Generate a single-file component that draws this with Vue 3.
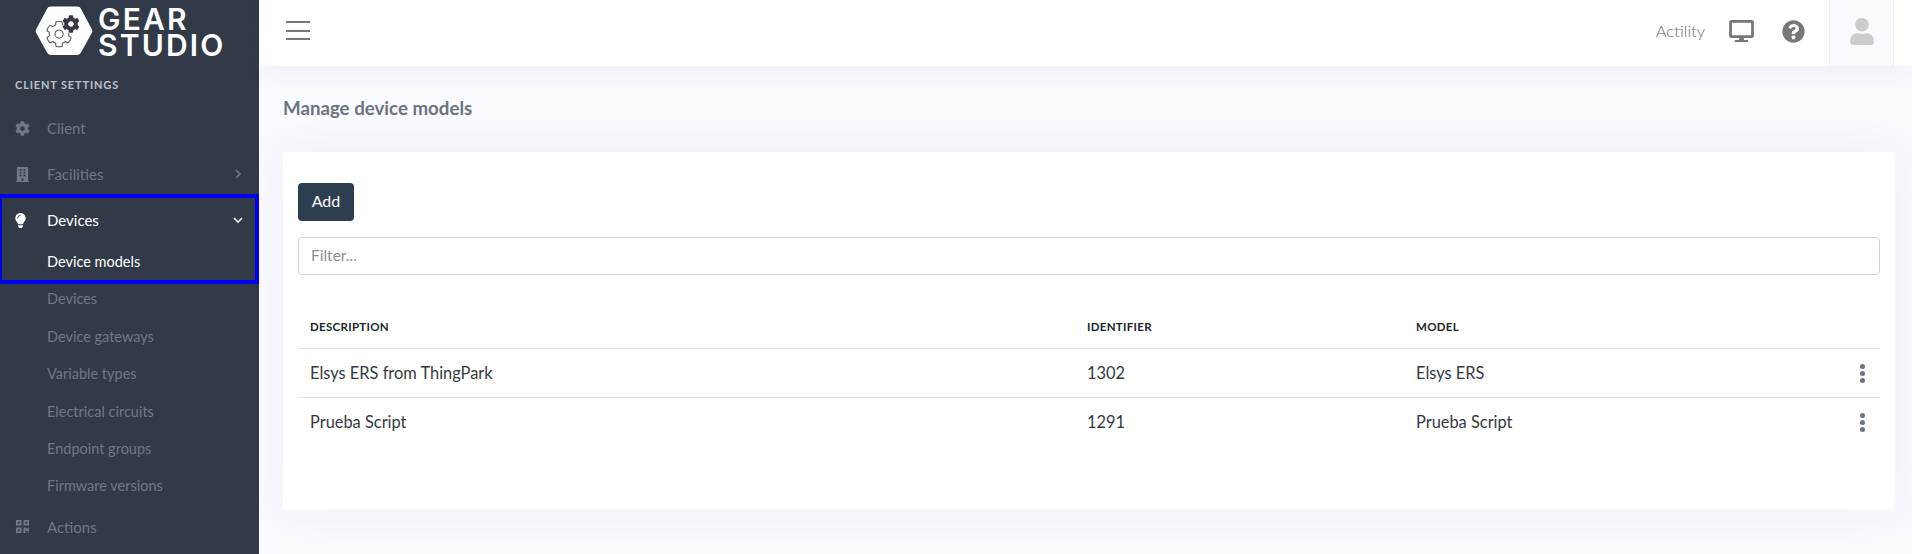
<template>
  <div class="layout">
    <aside class="sidebar">
      <div class="logo">
        <svg class="logo-mark" viewBox="0 0 58 50" width="58" height="50">
          <path class="logo-hex" d="M16 .5h26c2 0 3 .8 4 2.400l10.500 19.500c1 1.800 1 3.400 0 5.200L46 46.600c-1 1.600-2 2.400-4 2.400H16c-2 0-3-.8-4-2.400L1.500 27.600c-1-1.800-1-3.400 0-5.200L12 2.900C13 1.300 14 .5 16 .5z" />
          <g transform="translate(11 15) scale(.051)">
            <path class="logo-gear-line" :d="icons.cog" />
          </g>
          <g transform="translate(27 9) scale(.035)">
            <path class="logo-gear-fill" :d="icons.cog" />
          </g>
        </svg>
        <div class="logo-text">GEAR<br />STUDIO</div>
      </div>

      <div class="section-title">CLIENT SETTINGS</div>

      <nav class="nav">
        <a class="nav-row">
          <svg class="nav-icon" viewBox="0 0 512 512"><path :d="icons.cog" /></svg>
          <span>Client</span>
        </a>
        <a class="nav-row">
          <svg class="nav-icon" viewBox="0 0 448 512"><path :d="icons.building" /></svg>
          <span>Facilities</span>
          <svg class="chevron" viewBox="0 0 10 12"><path d="M3 2l4 4-4 4" /></svg>
        </a>
        <div class="nav-open">
          <a class="nav-row active">
            <svg class="nav-icon bulb" viewBox="0 0 352 512"><path :d="icons.bulb" /></svg>
            <span>Devices</span>
            <svg class="chevron" viewBox="0 0 12 10"><path d="M2 3l4 4 4-4" /></svg>
          </a>
          <a class="sub-row active first">Device models</a>
        </div>
        <a v-for="item in subItems" :key="item" class="sub-row">{{ item }}</a>
        <a class="nav-row last">
          <svg class="nav-icon" viewBox="0 0 448 512"><path :d="icons.qrcode" /></svg>
          <span>Actions</span>
        </a>
      </nav>
    </aside>

    <div class="main">
      <header class="topbar">
        <div class="burger"><i></i><i></i><i></i></div>
        <div class="top-right">
          <span class="client-name">Actility</span>
          <svg class="top-desktop" viewBox="0 0 576 512"><path :d="icons.desktop" /></svg>
          <svg class="top-help" viewBox="0 0 512 512"><path :d="icons.help" /></svg>
          <div class="user-cell">
            <svg class="top-user" viewBox="0 0 448 512"><path :d="icons.user" /></svg>
          </div>
        </div>
      </header>

      <main class="content">
        <h1 class="page-title">Manage device models</h1>
        <section class="card">
          <button class="btn-add">Add</button>
          <input class="filter" type="text" placeholder="Filter..." />
          <table class="models">
            <thead>
              <tr>
                <th class="col-desc">Description</th>
                <th class="col-id">Identifier</th>
                <th>Model</th>
                <th class="col-menu"></th>
              </tr>
            </thead>
            <tbody>
              <tr v-for="row in rows" :key="row.id">
                <td>{{ row.description }}</td>
                <td>{{ row.id }}</td>
                <td>{{ row.model }}</td>
                <td class="menu-cell">
                  <span class="dots"><i></i><i></i><i></i></span>
                </td>
              </tr>
            </tbody>
          </table>
        </section>
      </main>
    </div>
  </div>
</template>

<script setup>
const subItems = [
  'Devices',
  'Device gateways',
  'Variable types',
  'Electrical circuits',
  'Endpoint groups',
  'Firmware versions'
]

const rows = [
  { description: 'Elsys ERS from ThingPark', id: 1302, model: 'Elsys ERS' },
  { description: 'Prueba Script', id: 1291, model: 'Prueba Script' }
]

const icons = {
  cog: 'M487.4 315.7l-42.6-24.6c4.3-23.2 4.3-47 0-70.2l42.6-24.6c4.9-2.8 7.1-8.6 5.5-14-11.1-35.6-30-67.8-54.7-94.6-3.8-4.1-10-5.1-14.8-2.3L380.8 110c-17.9-15.4-38.5-27.3-60.8-35.1V25.8c0-5.6-3.9-10.5-9.4-11.7-36.7-8.2-74.3-7.8-109.2 0-5.5 1.2-9.4 6.1-9.4 11.7V75c-22.2 7.9-42.8 19.8-60.8 35.1L88.7 85.5c-4.9-2.8-11-1.9-14.8 2.3-24.7 26.7-43.6 58.9-54.7 94.6-1.7 5.4.6 11.2 5.5 14L67.3 221c-4.3 23.2-4.3 47 0 70.2l-42.6 24.6c-4.9 2.8-7.1 8.6-5.5 14 11.1 35.6 30 67.8 54.7 94.6 3.8 4.1 10 5.1 14.8 2.3l42.6-24.6c17.9 15.4 38.5 27.3 60.8 35.1v49.2c0 5.6 3.9 10.5 9.4 11.7 36.7 8.2 74.3 7.8 109.2 0 5.5-1.2 9.4-6.1 9.4-11.7v-49.2c22.2-7.9 42.8-19.8 60.8-35.1l42.6 24.6c4.9 2.8 11 1.9 14.8-2.3 24.7-26.7 43.6-58.9 54.7-94.6 1.5-5.5-.7-11.3-5.6-14.1zM256 336c-44.1 0-80-35.9-80-80s35.9-80 80-80 80 35.9 80 80-35.9 80-80 80z',
  building: 'M436 480h-20V24c0-13.3-10.7-24-24-24H56C42.7 0 32 10.7 32 24v456H12c-6.6 0-12 5.4-12 12v20h448v-20c0-6.6-5.4-12-12-12zM128 76c0-6.6 5.4-12 12-12h40c6.6 0 12 5.4 12 12v40c0 6.6-5.4 12-12 12h-40c-6.6 0-12-5.4-12-12V76zm0 96c0-6.6 5.4-12 12-12h40c6.6 0 12 5.4 12 12v40c0 6.6-5.4 12-12 12h-40c-6.6 0-12-5.4-12-12v-40zm52 148h-40c-6.6 0-12-5.4-12-12v-40c0-6.6 5.4-12 12-12h40c6.6 0 12 5.4 12 12v40c0 6.6-5.4 12-12 12zm76 160h-64v-84c0-6.6 5.4-12 12-12h40c6.6 0 12 5.4 12 12v84zm64-172c0 6.6-5.4 12-12 12h-40c-6.6 0-12-5.4-12-12v-40c0-6.6 5.4-12 12-12h40c6.6 0 12 5.4 12 12v40zm0-96c0 6.6-5.4 12-12 12h-40c-6.6 0-12-5.4-12-12v-40c0-6.6 5.4-12 12-12h40c6.6 0 12 5.4 12 12v40zm0-96c0 6.6-5.4 12-12 12h-40c-6.6 0-12-5.4-12-12V76c0-6.6 5.4-12 12-12h40c6.6 0 12 5.4 12 12v40z',
  bulb: 'M96.06 454.35c.01 6.29 1.87 12.45 5.36 17.69l17.09 25.69a31.99 31.99 0 0 0 26.64 14.28h61.71a31.99 31.99 0 0 0 26.64-14.28l17.09-25.69a31.989 31.989 0 0 0 5.36-17.69l.04-38.35H96.01l.05 38.35zM0 176c0 44.37 16.45 84.85 43.56 115.78 16.52 18.85 42.36 58.23 52.21 91.45.04.26.07.52.11.78h160.24c.04-.26.07-.51.11-.78 9.85-33.22 35.69-72.6 52.21-91.45C335.55 260.85 352 220.37 352 176 352 78.61 272.91-.3 175.45 0 73.44.31 0 82.97 0 176zm176-80c-44.11 0-80 35.89-80 80 0 8.84-7.16 16-16 16s-16-7.16-16-16c0-61.76 50.24-112 112-112 8.84 0 16 7.16 16 16s-7.16 16-16 16z',
  qrcode: 'M0 224h192V32H0v192zM64 96h64v64H64V96zm192-64v192h192V32H256zm128 128h-64V96h64v64zM0 480h192V288H0v192zm64-128h64v64H64v-64zm352-64h32v128h-96v-32h-32v96h-64V288h96v32h64v-32zm0 160h32v32h-32v-32zm-64 0h32v32h-32v-32z',
  desktop: 'M528 0H48C21.5 0 0 21.5 0 48v320c0 26.5 21.5 48 48 48h192l-16 48h-72c-13.3 0-24 10.7-24 24s10.7 24 24 24h272c13.3 0 24-10.7 24-24s-10.7-24-24-24h-72l-16-48h192c26.5 0 48-21.5 48-48V48c0-26.5-21.5-48-48-48zm-16 352H64V64h448v288z',
  help: 'M504 256c0 136.997-111.043 248-248 248S8 392.997 8 256C8 119.083 119.043 8 256 8s248 111.083 248 248zM262.655 90c-54.497 0-89.255 22.957-116.549 63.758-3.536 5.286-2.353 12.415 2.715 16.258l34.699 26.31c5.205 3.947 12.621 3.008 16.665-2.122 17.864-22.658 30.113-35.797 57.303-35.797 20.429 0 45.698 13.148 45.698 32.958 0 14.976-12.363 22.667-32.534 33.976C247.128 238.528 216 254.941 216 296v4c0 6.627 5.373 12 12 12h56c6.627 0 12-5.373 12-12v-1.333c0-28.462 83.186-29.647 83.186-106.667 0-58.002-60.165-102-116.531-102zM256 338c-25.365 0-46 20.635-46 46 0 25.364 20.635 46 46 46s46-20.636 46-46c0-25.365-20.635-46-46-46z',
  user: 'M224 256c70.7 0 128-57.3 128-128S294.7 0 224 0 96 57.3 96 128s57.3 128 128 128zm89.6 32h-16.7c-22.2 10.2-46.9 16-72.9 16s-50.6-5.8-72.9-16h-16.7C60.2 288 0 348.2 0 422.4V464c0 26.5 21.5 48 48 48h352c26.5 0 48-21.5 48-48v-41.6c0-74.2-60.2-134.4-134.4-134.4z'
}
</script>

<style>
html,
body {
  margin: 0;
  overflow: hidden;
}
</style>

<style scoped>
.layout {
  display: flex;
  width: 1912px;
  height: 554px;
  overflow: hidden;
  font-family: 'Lato', 'Noto Sans', sans-serif;
  background: #f9faff;
}

/* sidebar */
.sidebar {
  flex: 0 0 259px;
  height: 554px;
  overflow: hidden;
  background: #323a47;
  color: #6f7885;
}

.logo {
  height: 66px;
  box-sizing: border-box;
  padding: 6px 0 0 35px;
  display: flex;
  gap: 5px;
}

.logo-mark {
  flex: none;
}

.logo-hex {
  fill: #fff;
}

.logo-gear-line {
  fill: none;
  stroke: #4a5260;
  stroke-width: 20;
}

.logo-gear-fill {
  fill: #323a47;
  stroke: #fff;
  stroke-width: 30;
  paint-order: stroke;
}

.logo-text {
  font-family: 'Inter', sans-serif;
  font-size: 30px;
  font-weight: 600;
  line-height: 26px;
  color: #fff;
  letter-spacing: 2.200px;
}

.section-title {
  height: 37px;
  line-height: 37px;
  margin-bottom: 2px;
  padding-left: 15px;
  font-size: 11px;
  font-weight: 700;
  letter-spacing: 0.85px;
  color: #bcc1c8;
}

.nav-row {
  display: flex;
  align-items: center;
  height: 46px;
  padding-left: 15px;
  font-size: 15px;
}

.nav-row.last {
  margin-top: -1px;
}

.nav-icon {
  flex: none;
  width: 15px;
  height: 15px;
  margin-right: 17px;
  fill: #6f7885;
}

.nav-icon.bulb {
  margin-left: -2px;
  margin-right: 19px;
}

.chevron {
  width: 12px;
  height: 12px;
  margin-left: auto;
  margin-right: 15px;
  fill: none;
  stroke: #6f7885;
  stroke-width: 1.600;
}

.nav-open {
  position: relative;
}

/* blue highlight frame drawn over the open group */
.nav-open::after {
  content: '';
  position: absolute;
  inset: -3px 0 -4px -2px;
  border: 4px solid #0000f5;
  pointer-events: none;
}

.nav-row.active {
  color: #fff;
}

.nav-row.active .nav-icon {
  fill: #fff;
}

.nav-row.active .chevron {
  stroke: #fff;
}

.sub-row {
  display: block;
  height: 37.400px;
  line-height: 38.400px;
  padding-left: 47px;
  font-size: 14.500px;
}

.sub-row.active {
  color: #fff;
}

/* main column */
.main {
  flex: 1;
  min-width: 0;
  display: flex;
  flex-direction: column;
}

.topbar {
  flex: 0 0 66px;
  display: flex;
  align-items: center;
  justify-content: space-between;
  background: #fff;
  padding-left: 27px;
  box-shadow: 0 6px 24px rgba(40, 50, 90, 0.05);
  position: relative;
}

.burger {
  display: flex;
  flex-direction: column;
  gap: 6.500px;
  margin-bottom: 5px;
}

.burger i {
  display: block;
  width: 24px;
  height: 2px;
  background: #777;
}

.top-right {
  display: flex;
  align-items: center;
  height: 100%;
}

.client-name {
  font-size: 16.500px;
  font-weight: 300;
  color: #6a6a6a;
  margin-right: 24px;
  margin-bottom: 4px;
}

.top-desktop {
  width: 25px;
  height: 22px;
  fill: #777;
  margin-right: 28px;
  margin-bottom: 4px;
}

.top-help {
  width: 23px;
  height: 23px;
  fill: #777;
  margin-right: 24px;
  margin-bottom: 4px;
}

.user-cell {
  width: 65px;
  height: 100%;
  box-sizing: border-box;
  padding-bottom: 4px;
  display: flex;
  align-items: center;
  justify-content: center;
  background: #f9fafd;
  border-left: 1px solid #eef0f4;
  border-right: 1px solid #eef0f4;
  margin-right: 18px;
}

.top-user {
  width: 24px;
  height: 27px;
  fill: #ccc;
}

.content {
  padding: 0 17px 0 24px;
}

.page-title {
  margin: 0;
  height: 86px;
  line-height: 84px;
  font-size: 18.700px;
  font-weight: 700;
  color: #6c757d;
}

.card {
  height: 358px;
  box-sizing: border-box;
  padding: 31px 15px 0;
  background: #fff;
  border-radius: 4px;
  box-shadow: 0 0 40px rgba(40, 50, 90, 0.06);
}

.btn-add {
  display: block;
  width: 56px;
  height: 38px;
  padding: 0 0 3px;
  border: 0;
  border-radius: 4px;
  background: #2c3e50;
  color: #fff;
  font: 400 16px 'Lato', 'Noto Sans', sans-serif;
}

.filter {
  display: block;
  width: 100%;
  height: 38px;
  margin-top: 16px;
  box-sizing: border-box;
  padding: 0 12px 2px;
  border: 1px solid #ced4da;
  border-radius: 4px;
  font: 400 15.500px 'Lato', 'Noto Sans', sans-serif;
  outline: none;
}

.filter::placeholder {
  color: #868e96;
}

.models {
  width: 100%;
  margin-top: 29px;
  border-collapse: collapse;
  table-layout: fixed;
  font-size: 16.400px;
  color: #343a40;
}

.col-desc {
  width: 777px;
}

.col-id {
  width: 329px;
}

.col-menu {
  width: 60px;
}

th {
  box-sizing: border-box;
  height: 44px;
  padding: 2px 12px 0;
  text-align: left;
  font-size: 11.500px;
  font-weight: 700;
  text-transform: uppercase;
  color: #212529;
  letter-spacing: 0.3px;
  border-bottom: 1px solid #e2e3e8;
}

td {
  height: 48px;
  padding: 0 12px;
  border-bottom: 1px solid #e2e3e8;
}

tbody tr:last-child td {
  border-bottom: 0;
}

.menu-cell {
  text-align: right;
  padding-right: 15px;
}

.dots {
  display: inline-flex;
  flex-direction: column;
  gap: 2px;
  vertical-align: middle;
}

.dots i {
  display: block;
  width: 5px;
  height: 5px;
  border-radius: 50%;
  background: #6c757d;
}
</style>
